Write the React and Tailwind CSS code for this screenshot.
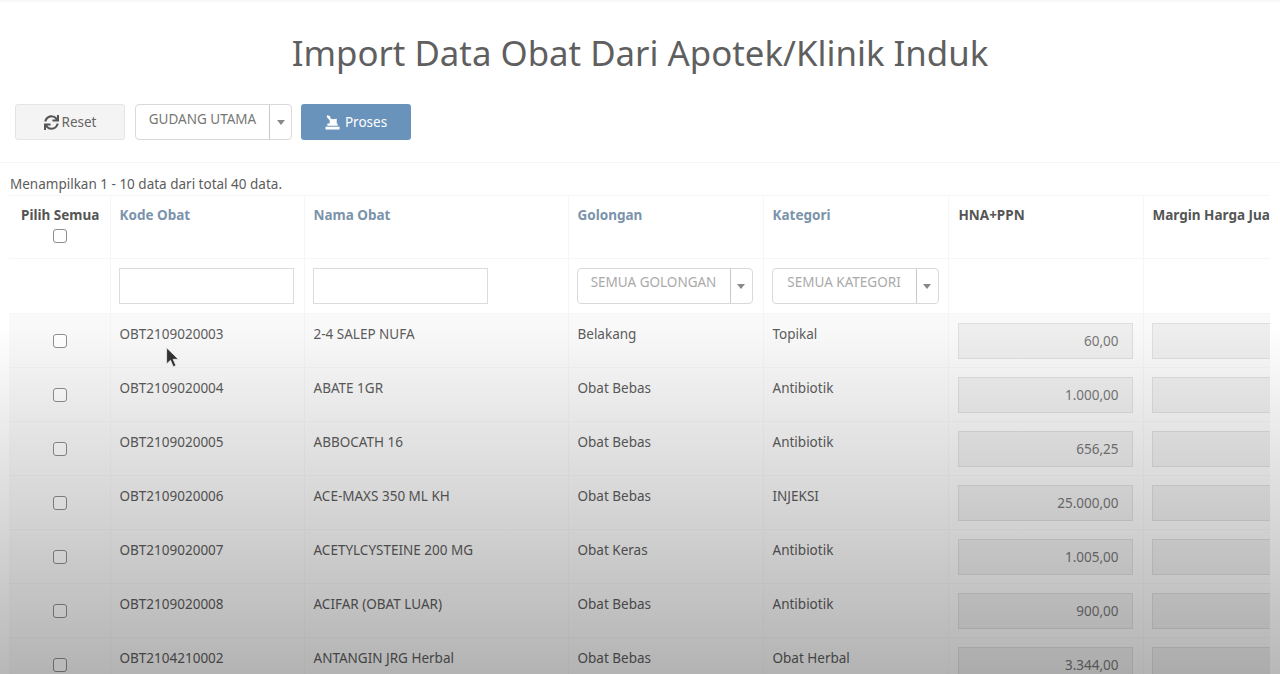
import React from 'react';
import { FaSync } from 'react-icons/fa';

const ROWS = [
  { kode: 'OBT2109020003', nama: '2-4 SALEP NUFA', golongan: 'Belakang', kategori: 'Topikal', hna: '60,00' },
  { kode: 'OBT2109020004', nama: 'ABATE 1GR', golongan: 'Obat Bebas', kategori: 'Antibiotik', hna: '1.000,00' },
  { kode: 'OBT2109020005', nama: 'ABBOCATH 16', golongan: 'Obat Bebas', kategori: 'Antibiotik', hna: '656,25' },
  { kode: 'OBT2109020006', nama: 'ACE-MAXS 350 ML KH', golongan: 'Obat Bebas', kategori: 'INJEKSI', hna: '25.000,00' },
  { kode: 'OBT2109020007', nama: 'ACETYLCYSTEINE 200 MG', golongan: 'Obat Keras', kategori: 'Antibiotik', hna: '1.005,00' },
  { kode: 'OBT2109020008', nama: 'ACIFAR (OBAT LUAR)', golongan: 'Obat Bebas', kategori: 'Antibiotik', hna: '900,00' },
  { kode: 'OBT2104210002', nama: 'ANTANGIN JRG Herbal', golongan: 'Obat Bebas', kategori: 'Obat Herbal', hna: '3.344,00' },
];

const Checkbox = () => (
  <span className="inline-block w-[14px] h-[14px] rounded-[3px] border border-[#8f8f8f] bg-white" />
);

const Caret = () => (
  <span className="w-0 h-0 border-x-[4px] border-x-transparent border-t-[5px] border-t-[#888]" />
);

const SelectBox = ({ label, textClass, width }) => (
  <div className={`flex h-[36px] ${width} rounded-[4px] border border-[#d9d9d9] bg-white`}>
    <div className={`flex-1 text-center text-[13.5px] ${textClass}`}>{label}</div>
    <div className="w-[22px] flex items-center justify-center border-l border-[#c9c9c9]">
      <Caret />
    </div>
  </div>
);

const HeadCell = ({ children, blue, className = 'px-[9px]' }) => (
  <th className={`border-x border-[#f6f6f6] pt-[9px] align-top text-left text-[13.5px] font-bold whitespace-nowrap overflow-hidden ${className} ${blue ? 'text-[#7b93ab]' : 'text-[#555]'}`}>
    {children}
  </th>
);

const ReadonlyInput = ({ value }) => (
  <div className="h-[36px] w-[175px] border border-[#dedede] bg-[#eeeeee] pr-[13px] pt-[7px] text-right text-[13.5px] text-[#777]">
    {value}
  </div>
);

export default function App() {
  return (
    <div className="relative h-[674px] overflow-hidden border-t-2 border-[#f8f8f8] bg-white text-[13.5px] text-[#5c5c5c] font-['Noto_Sans','Open_Sans',sans-serif]">
      <h1 className="pt-[26px] text-center text-[34.8px] leading-[50px] text-[#5f5f5f]">
        Import Data Obat Dari Apotek/Klinik Induk
      </h1>

      {/* Toolbar */}
      <div className="flex items-center pl-[15px] mt-[26px] pb-[22px] border-b border-[#f5f5f5]">
        <button className="flex items-center justify-center gap-[3px] h-[36px] w-[110px] rounded-[3px] border border-[#e4e4e4] bg-[#f4f4f4] pt-[1px] text-[13.5px] text-[#666]">
          <FaSync className="w-[15px] h-[15px] text-[#555]" />
          Reset
        </button>
        <div className="ml-[10px] mr-[9px]">
          <SelectBox label="GUDANG UTAMA" textClass="pt-[4px] text-[#777]" width="w-[157px]" />
        </div>
        <button className="flex items-center justify-center gap-[5px] h-[36px] w-[110px] rounded-[3px] bg-[#6a93bb] pt-[1px] text-[13.5px] text-white">
          <svg viewBox="0 0 16 16" className="w-[15px] h-[15px]" fill="currentColor">
            <path d="M2.500 0l3.500 1.800-.6 1.700L8 4.500l4.500-.5v5h1V11.500H2.500V9H5V5.500L1.800 2z" />
            <path d="M.5 12.500h15V15.500H.5z" />
          </svg>
          Proses
        </button>
      </div>

      <p className="pl-[10px] pt-[12px] leading-[18px] h-[32px] text-[13.5px] text-[#5c5c5c]">
        Menampilkan 1 - 10 data dari total 40 data.
      </p>

      {/* Table */}
      <div className="ml-[9px] w-[1261px] overflow-hidden">
        <table className="table-fixed border-collapse w-[1400px]">
          <colgroup>
            <col className="w-[101px]" />
            <col className="w-[194px]" />
            <col className="w-[264px]" />
            <col className="w-[195px]" />
            <col className="w-[185px]" />
            <col className="w-[195px]" />
            <col className="w-[266px]" />
          </colgroup>
          <thead>
            <tr className="h-[63px] border-y border-[#f6f6f6]">
              <th className="border-r border-[#f6f6f6] pt-[9px] pl-[2px] align-top text-center text-[13.5px] font-bold text-[#555]">
                <div>Pilih Semua</div>
                <div className="mt-[4px] flex justify-center"><Checkbox /></div>
              </th>
              <HeadCell blue>Kode Obat</HeadCell>
              <HeadCell blue>Nama Obat</HeadCell>
              <HeadCell blue>Golongan</HeadCell>
              <HeadCell blue>Kategori</HeadCell>
              <HeadCell className="pl-[10px] pr-[9px]">HNA+PPN</HeadCell>
              <HeadCell>Margin Harga Jual</HeadCell>
            </tr>
            <tr className="h-[55px] border-b border-[#f6f6f6]">
              <td className="border-r border-[#f6f6f6]" />
              <td className="border-x border-[#f6f6f6] px-[8px]">
                <div className="h-[36px] w-[175px] border border-[#dcdcdc] bg-white" />
              </td>
              <td className="border-x border-[#f6f6f6] px-[8px]">
                <div className="h-[36px] w-[175px] border border-[#dcdcdc] bg-white" />
              </td>
              <td className="border-x border-[#f6f6f6] px-[8px]">
                <SelectBox label="SEMUA GOLONGAN" textClass="pt-[3px] text-[#aaa]" width="w-[176px]" />
              </td>
              <td className="border-x border-[#f6f6f6] px-[8px]">
                <SelectBox label="SEMUA KATEGORI" textClass="pt-[3px] text-[#aaa]" width="w-[167px]" />
              </td>
              <td className="border-x border-[#f6f6f6]" />
              <td className="border-x border-[#f6f6f6]" />
            </tr>
          </thead>
          <tbody>
            {ROWS.map((row) => (
              <tr key={row.kode} className="h-[54px] border-b border-[#f3f3f3] bg-[#f9f9f9]">
                <td className="border-r border-[#f3f3f3] pl-[2px] text-center align-middle">
                  <div className="flex justify-center"><Checkbox /></div>
                </td>
                <td className="border-x border-[#f3f3f3] px-[9px] pb-[13px] align-middle">{row.kode}</td>
                <td className="border-x border-[#f3f3f3] px-[9px] pb-[13px] align-middle">{row.nama}</td>
                <td className="border-x border-[#f3f3f3] px-[9px] pb-[13px] align-middle">{row.golongan}</td>
                <td className="border-x border-[#f3f3f3] px-[9px] pb-[13px] align-middle">{row.kategori}</td>
                <td className="border-x border-[#f3f3f3] pl-[9px] align-middle"><ReadonlyInput value={row.hna} /></td>
                <td className="border-x border-[#f3f3f3] px-[8px] align-middle"><ReadonlyInput value="" /></td>
              </tr>
            ))}
          </tbody>
        </table>
      </div>

      {/* Mouse pointer */}
      <svg viewBox="0 0 14 20" className="absolute left-[165px] top-[344px] w-[15px] h-[23px]">
        <path d="M1.500 1v15l3.600-3.400 2.600 6 2.500-1.100-2.600-5.800h4.900z" fill="#333" stroke="#eee" strokeWidth="0.8" />
      </svg>

      {/* Player shade over the lower part of the frame */}
      <div className="pointer-events-none absolute inset-x-0 top-[325px] bottom-0 bg-gradient-to-b from-black/0 to-black/28" />
    </div>
  );
}
